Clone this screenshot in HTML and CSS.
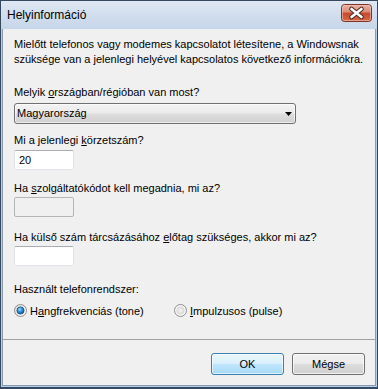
FILE: index.html
```html
<!DOCTYPE html>
<html lang="hu">
<head>
<meta charset="utf-8">
<title>Helyinformáció</title>
<link rel="stylesheet" href="styles.css">
</head>
<body>
<div class="window">
  <div class="titlebar">
    <span class="title">Helyinformáció</span>
    <span class="close">
      <svg width="31" height="18" viewBox="0 0 31 18">
        <defs>
          <linearGradient id="cg" x1="0" y1="0" x2="0" y2="1">
            <stop offset="0" stop-color="#eab3a6"/>
            <stop offset="0.45" stop-color="#d98a76"/>
            <stop offset="0.5" stop-color="#c8472e"/>
            <stop offset="1" stop-color="#d56a47"/>
          </linearGradient>
        </defs>
        <rect x="0.5" y="0.5" width="30" height="17" rx="3" fill="url(#cg)" stroke="#7d3326"/>
        <rect x="1.5" y="1.5" width="28" height="15" rx="2" fill="none" stroke="#f1c7bd" stroke-opacity="0.6"/>
        <path d="M10.5 5 L20.5 13 M20.5 5 L10.5 13" stroke="#4a2a25" stroke-width="4.6" stroke-linecap="round"/>
        <path d="M10.5 5 L20.5 13 M20.5 5 L10.5 13" stroke="#ffffff" stroke-width="2.6" stroke-linecap="round"/>
      </svg>
    </span>
  </div>
  <div class="client">
    <div class="main">
      <p class="intro">Mielőtt telefonos vagy modemes kapcsolatot létesítene, a Windowsnak<br>szüksége van a jelenlegi helyével kapcsolatos következő információkra.</p>

      <div class="label l1">Melyik <u>o</u>rszágban/régióban van most?</div>
      <div class="combo">
        <span>Magyarország</span>
        <svg class="arrow" width="7" height="4" viewBox="0 0 7 4"><path d="M0 0 H7 L3.5 4 Z" fill="#000"/></svg>
      </div>

      <div class="label l2">Mi a jelenlegi <u>k</u>örzetszám?</div>
      <div class="textbox">20</div>

      <div class="label l3">Ha <u>s</u>zolgáltatókódot kell megadnia, mi az?</div>
      <div class="textbox disabled"></div>

      <div class="label l4">Ha külső szám tárcsázásához <u>e</u>lőtag szükséges, akkor mi az?</div>
      <div class="textbox"></div>

      <div class="label l5">Használt telefonrendszer:</div>
      <div class="radios">
        <div class="radio first">
          <svg width="13" height="13" viewBox="0 0 13 13">
            <defs>
              <linearGradient id="rb" x1="0" y1="0" x2="1" y2="1">
                <stop offset="0" stop-color="#d6d6d6"/>
                <stop offset="1" stop-color="#ffffff"/>
              </linearGradient>
              <radialGradient id="dot" cx="0.4" cy="0.35" r="0.7">
                <stop offset="0" stop-color="#9fe0ff"/>
                <stop offset="0.5" stop-color="#2a8ad4"/>
                <stop offset="1" stop-color="#0d4f8e"/>
              </radialGradient>
            </defs>
            <circle cx="6.5" cy="6.5" r="6" fill="url(#rb)" stroke="#8f8f8f"/>
            <circle cx="6.5" cy="6.5" r="3.6" fill="url(#dot)" stroke="#1c5180" stroke-width="0.8"/>
          </svg>
          <span>H<u>a</u>ngfrekvenciás (tone)</span>
        </div>
        <div class="radio">
          <svg width="13" height="13" viewBox="0 0 13 13">
            <defs>
              <radialGradient id="ri" cx="0.5" cy="0.5" r="0.6">
                <stop offset="0" stop-color="#f4f4f4"/>
                <stop offset="1" stop-color="#d2d2d2"/>
              </radialGradient>
            </defs>
            <circle cx="6.5" cy="6.5" r="6" fill="#f6f6f6" stroke="#8f8f8f"/>
            <circle cx="6.5" cy="6.5" r="4" fill="url(#ri)"/>
          </svg>
          <span><u>I</u>mpulzusos (pulse)</span>
        </div>
      </div>
    </div>
    <div class="footer">
      <div class="btn default">OK</div>
      <div class="btn">Mégse</div>
    </div>
  </div>
</div>
</body>
</html>
```
FILE: styles.css
```css
html, body {
  margin: 0;
  padding: 0;
}
body {
  width: 378px;
  height: 389px;
  overflow: hidden;
  font-family: "Liberation Sans", Arial, sans-serif;
  font-size: 11px;
  color: #000;
}
.window {
  box-sizing: border-box;
  width: 378px;
  height: 389px;
  border: 1px solid #37495e;
  border-bottom-width: 2px;
  background: #b3cfec;
  display: flex;
  flex-direction: column;
}
.titlebar {
  height: 28px;
  flex: none;
  display: flex;
  justify-content: space-between;
  align-items: flex-start;
  background: linear-gradient(#dfe8f3, #cfdcec 60%, #c6d6e9);
}
.title {
  font-size: 12px;
  line-height: 14px;
  padding: 7px 0 0 6px;
}
.close {
  display: block;
  margin: 3px 5px 0 0;
  height: 18px;
}
.close svg {
  display: block;
}
.client {
  flex: 1;
  margin: 0 1px 1px 1px;
  border: 1px solid #8a9bb0;
  border-top: none;
  background: #f0f0f0;
  display: flex;
  flex-direction: column;
}
.main {
  flex: 1;
  padding: 8px 10px 0 11px;
}
.intro {
  margin: 0;
  line-height: 15px;
}
.label {
  line-height: 15px;
}
.l1 { margin-top: 18px; }
.l2 { margin-top: 9px; }
.l3 { margin-top: 11px; }
.l4 { margin-top: 13px; }
.l5 { margin-top: 16px; }
.combo {
  box-sizing: border-box;
  margin-top: 3px;
  width: 282px;
  height: 21px;
  border: 1px solid #707070;
  border-radius: 3px;
  background: linear-gradient(#f3f3f3, #ebebeb 45%, #dedede 55%, #d0d0d0);
  box-shadow: inset 0 0 0 1px rgba(255,255,255,0.6);
  display: flex;
  align-items: center;
  justify-content: space-between;
  padding: 0 3px 0 2px;
  line-height: 15px;
}
.arrow {
  display: block;
}
.textbox {
  box-sizing: border-box;
  margin-top: 2px;
  width: 60px;
  height: 20px;
  background: #fff;
  border: 1px solid #e2e3ea;
  border-top-color: #abadb3;
  border-radius: 2px;
  padding: 2px 4px;
  line-height: 15px;
}
.l3 + .textbox, .l4 + .textbox { margin-top: 1px; }
.textbox.disabled {
  background: #f0f0f0;
  border-color: #b3b6b9;
}
.radios {
  margin-top: 6px;
  display: flex;
  height: 15px;
  align-items: center;
}
.radio {
  display: flex;
  align-items: center;
  gap: 3px;
}
.radio svg {
  display: block;
}
.radio.first {
  width: 160px;
}
.footer {
  box-sizing: border-box;
  height: 46px;
  flex: none;
  border-top: 1px solid #a0a0a0;
  padding: 13px 10px 0 0;
  display: flex;
  justify-content: flex-end;
  gap: 8px;
}
.btn {
  box-sizing: border-box;
  width: 73px;
  height: 22px;
  border: 1px solid #707070;
  border-radius: 3px;
  background: linear-gradient(#f2f2f2, #ebebeb 48%, #dddddd 52%, #cfcfcf);
  box-shadow: inset 0 0 0 1px rgba(255,255,255,0.7);
  text-align: center;
  line-height: 20px;
}
.btn.default {
  border-color: #3c7fb1;
  background: linear-gradient(#eaf6fd, #d9f0fc 48%, #bee6fd 52%, #a7d9f5);
  box-shadow: inset 0 0 0 1px rgba(255,255,255,0.6), 0 0 0 0 #000;
}
```
